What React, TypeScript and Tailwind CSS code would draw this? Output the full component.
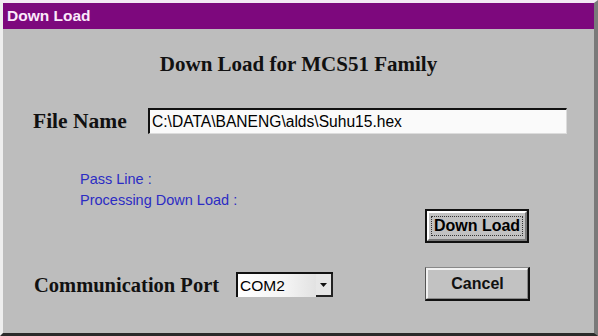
import React from "react";

export default function App() {
  const serif = { fontFamily: '"Liberation Serif", "Times New Roman", serif' };
  const sans = { fontFamily: '"Liberation Sans", Arial, sans-serif' };
  return (
    <div className="w-[598px] h-[336px] overflow-hidden bg-[#bdbdbd]">
      <div className="w-[598px] h-[336px] flex flex-col border-l-[3px] border-t-[3px] border-l-[#eeeeee] border-t-[#f4e8f4] border-r-[4px] border-r-[#7a7a7a] border-b-[3px] border-b-[#2a2a2a] bg-[#bdbdbd]">
        <div className="h-[26px] bg-[#7d087d] flex items-center pl-[4px]">
          <span className="text-[15.5px] font-bold text-[#fbe9fb] leading-none" style={sans}>
            Down Load
          </span>
        </div>
        <div className="flex-1 flex flex-col pt-[23px]">
          <div className="text-center text-[21px] leading-[24px] font-bold text-[#111]" style={serif}>
            Down Load for MCS51 Family
          </div>
          <div className="flex items-center mt-[32px] pl-[30px]">
            <div className="w-[115px] text-[21.5px] leading-[24px] font-bold text-[#111]" style={serif}>
              File Name
            </div>
            <div className="w-[419px] h-[26px] flex items-center bg-[#fafafa] border-t-2 border-l-2 border-t-[#111] border-l-[#111] border-r border-b border-r-[#dcdcdc] border-b-[#dcdcdc] pl-[2px]">
              <span className="text-[15.6px] leading-none text-black" style={sans}>
                C:\DATA\BANENG\alds\Suhu15.hex
              </span>
            </div>
          </div>
          <div className="flex mt-[35px] pr-[64px]">
            <div className="flex-1 flex flex-col justify-between pl-[31px] pb-[4px]">
              <div className="pl-[46px] text-[14.5px] leading-[21px] text-[#2c2cc4]" style={sans}>
                <div>Pass Line :</div>
                <div>Processing Down Load :</div>
              </div>
              <div className="flex items-center">
                <div className="w-[202px] text-[20.5px] leading-[24px] font-bold text-[#111]" style={serif}>
                  Communication Port
                </div>
                <div className="w-[97px] h-[25px] flex border-t-2 border-l-2 border-t-[#111] border-l-[#111] bg-gradient-to-r from-white via-[#f4f4f4] to-[#d8d8d8]">
                  <div className="flex-1 flex items-center pl-[2px]">
                    <span className="text-[15.5px] leading-none text-black" style={sans}>
                      COM2
                    </span>
                  </div>
                  <div className="w-[17px] flex items-center justify-center bg-[#e6e6e6] border-r-2 border-b-2 border-r-[#222] border-b-[#222]">
                    <svg width="7" height="4" viewBox="0 0 7 4">
                      <path d="M0 0 L7 0 L3.5 4 Z" fill="#111" />
                    </svg>
                  </div>
                </div>
              </div>
            </div>
            <div className="flex flex-col pt-[40px] gap-[24px]">
              <div className="w-[104px] h-[34px] border-2 border-[#111] flex">
                <div className="flex-1 flex items-center justify-center border-t-2 border-l-2 border-t-white border-l-white border-r-2 border-b-2 border-r-[#7a7a7a] border-b-[#7a7a7a] bg-[#c2c2c2]">
                  <span className="px-[2px] border border-dotted border-[#333] text-[16px] leading-[18px] font-bold text-black" style={sans}>
                    Down Load
                  </span>
                </div>
              </div>
              <div className="w-[105px] h-[34px] flex border-l border-t border-l-[#555] border-t-[#888] border-r-2 border-b-2 border-r-[#111] border-b-[#111]">
                <div className="flex-1 flex items-center justify-center border-t-2 border-l-2 border-t-[#f2f2f2] border-l-[#f2f2f2] border-r border-b border-r-[#888] border-b-[#888] bg-[#c2c2c2]">
                  <span className="text-[16px] leading-none font-bold text-[#111]" style={sans}>
                    Cancel
                  </span>
                </div>
              </div>
            </div>
          </div>
        </div>
      </div>
    </div>
  );
}
